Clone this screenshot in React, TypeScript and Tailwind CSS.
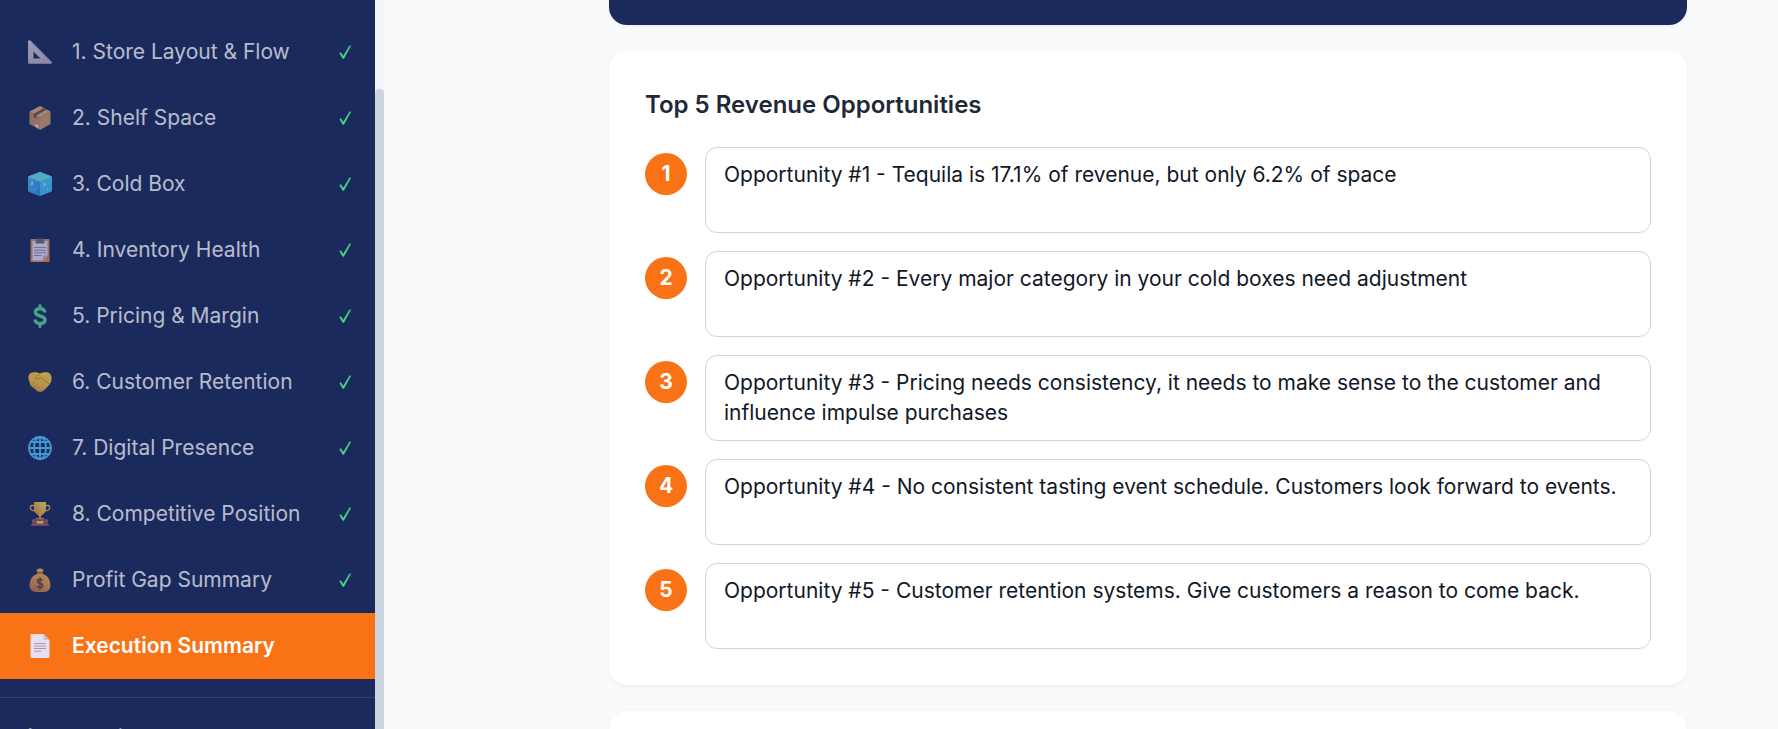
import type { ReactNode } from 'react';

interface NavItem {
  label: string;
  icon: ReactNode;
  done: boolean;
  active?: boolean;
}

function RulerIcon() {
  return (
    <svg viewBox="0 0 24 24" className="size-6">
      <defs>
        <linearGradient id="ruler" x1="0" y1="0" x2="0" y2="1">
          <stop offset="0" stopColor="#c8c2d6" />
          <stop offset="1" stopColor="#b4adbd" />
        </linearGradient>
      </defs>
      <path fillRule="evenodd" fill="url(#ruler)" d="M0 1.500Q0 .2 1.300 .2Q2 0 3 .9L23.500 21.800Q24.500 23.700 22.500 23.700H1.300Q0 23.700 0 22.400ZM5.500 11.500V18.500H12.500Z" />
      <path d="M4 2.800L23 21.800" fill="none" stroke="#8f6fe0" strokeWidth="1.300" strokeDasharray="1 1.700" />
    </svg>
  );
}

function BoxIcon() {
  return (
    <svg viewBox="0 0 24 24" className="size-6">
      <path d="M12 0L22.500 5.500L12 11.500L1.500 5.500Z" fill="#d0a680" />
      <path d="M1.500 5.500L12 11.500V24L1.500 18Z" fill="#bd886c" />
      <path d="M22.500 5.500L12 11.500V24L22.500 18Z" fill="#c8926b" />
      <path d="M15.800 2L5.500 8V11.500L8.200 12.800V9.400L18.600 3.500Z" fill="#7a4f46" />
      <path d="M7.500 18L10.500 19.500V22L7.500 20.500Z" fill="#efdff2" />
    </svg>
  );
}

function IceIcon() {
  return (
    <svg viewBox="0 0 24 24" className="size-6">
      <defs>
        <linearGradient id="iceLeft" x1="0" y1="0" x2="1" y2="1">
          <stop offset="0" stopColor="#50b3df" />
          <stop offset="1" stopColor="#367eee" />
        </linearGradient>
        <linearGradient id="iceRight" x1="0" y1="0" x2="0" y2="1">
          <stop offset="0" stopColor="#48c0ed" />
          <stop offset="1" stopColor="#40b4f5" />
        </linearGradient>
      </defs>
      <path d="M12 0L23.300 4.200Q24 4.600 24 5.300V18.200Q24 19.300 23 19.700L12 24L1 19.700Q0 19.300 0 18.200V5.300Q0 4.600 .7 4.200Z" fill="url(#iceRight)" />
      <path d="M0 5L12 9.500V24L1 19.700Q0 19.300 0 18.200Z" fill="url(#iceLeft)" />
      <path d="M12 0L24 4.600L12 9.500L0 4.600Z" fill="#66d6e8" />
      <path d="M4 9Q6 12.500 4 13.500Q2 13 4 9ZM16.500 10Q18.500 13.500 16.500 14.500Q14.500 13.500 16.500 10Z" fill="#a9e0fa" />
      <circle cx="6.500" cy="18" r=".8" fill="#8bd3fa" />
      <circle cx="19.500" cy="17" r=".7" fill="#9bdcfb" />
      <circle cx="9.500" cy="15" r=".6" fill="#8bd3fa" />
    </svg>
  );
}

function ClipboardIcon() {
  return (
    <svg viewBox="0 0 24 24" className="size-6">
      <rect x="2.500" y="1" width="19" height="23" rx="1" fill="#cb8762" />
      <path d="M4.500 3H19.500V17.500L15 22.500H4.500Z" fill="#dcd3ec" />
      <path d="M15 22.500V18.500Q15 17.500 16 17.500H19.500Z" fill="#b6a6cc" />
      <path d="M7.500 1.500H10Q10.500 0 12 0Q13.500 0 14 1.500H16.500V5.500H7.500Z" fill="#6b6677" />
      <path d="M6 9.500H18M6 12.200H18M6 14.800H18M6 17.500H13.500" stroke="#9088a6" strokeWidth="1" />
    </svg>
  );
}

function DollarIcon() {
  return (
    <svg viewBox="0 0 24 24" className="size-6">
      <path d="M16.900 8.500Q16.200 4.700 12 4.700Q7.400 4.700 7.400 8.100Q7.400 10.800 12 12Q17 13.200 17 16Q17 19.500 12 19.500Q7.600 19.500 7 15.500" fill="none" stroke="#55c997" strokeWidth="3.400" />
      <path d="M12 1.500V4.500M12 20V22.500" stroke="#55c997" strokeWidth="3" strokeLinecap="round" />
    </svg>
  );
}

function HandshakeIcon() {
  return (
    <svg viewBox="0 0 24 24" className="size-6">
      <defs>
        <linearGradient id="hands" x1=".6" y1="0" x2=".3" y2="1">
          <stop offset="0" stopColor="#f3c945" />
          <stop offset=".6" stopColor="#f0b645" />
          <stop offset="1" stopColor="#e39147" />
        </linearGradient>
      </defs>
      <path d="M6 2.300Q9 1.800 12 3.500Q15 1.800 18.500 2.300Q22 2.500 23.300 6Q24.500 10.500 21.500 14.500L17 19.500Q14 22.500 11.500 21.800Q9 21.800 7.500 19.500L3 16Q1.200 14 1.800 12Q-.2 9 .7 5.500Q2 2.300 6 2.300Z" fill="url(#hands)" />
      <path d="M12 3.500Q8 6 7.300 8.500Q9.500 10 13 7.500L21 14M3.500 15.500L6 12.500M5.800 18L8.500 14.500M8.500 20L11 17" fill="none" stroke="#bf7a35" strokeWidth=".8" strokeLinecap="round" />
    </svg>
  );
}

function GlobeIcon() {
  return (
    <svg viewBox="0 0 24 24" className="size-6" fill="none" stroke="#4fbdf8" strokeWidth="1.800">
      <circle cx="12" cy="12" r="11" />
      <ellipse cx="12" cy="12" rx="6" ry="11" />
      <path d="M12 1V23M1 12H23M3 6H21M3 18H21" />
    </svg>
  );
}

function TrophyIcon() {
  return (
    <svg viewBox="0 0 24 24" className="size-6">
      <defs>
        <linearGradient id="cup" x1="0" y1="1" x2="1" y2="0">
          <stop offset="0" stopColor="#dc7c42" />
          <stop offset="1" stopColor="#ecd562" />
        </linearGradient>
      </defs>
      <path d="M6.500 3.500H3.800Q1.700 3.800 2.700 6.700Q3.700 9 7 8.600M17.500 3.500H20.200Q22.300 3.800 21.300 6.700Q20.300 9 17 8.600" fill="none" stroke="#dea050" strokeWidth="1.500" />
      <path d="M6 0H18V6Q18 11 14 13L13 14.500V17.500H11V14.500L10 13Q6 11 6 6Z" fill="url(#cup)" />
      <path d="M8 16H16V17.500H8Z" fill="#d58b40" />
      <path d="M5.500 17H18.500Q20 17 20 18.500V22Q21 22 21 24H3Q3 22 4 22V18.500Q4 17 5.500 17Z" fill="#8d566d" />
      <rect x="8.800" y="19" width="6.400" height="2.600" fill="#edc65f" />
    </svg>
  );
}

function MoneyBagIcon() {
  return (
    <svg viewBox="0 0 24 24" className="size-6">
      <defs>
        <linearGradient id="bag" x1=".7" y1="0" x2=".3" y2="1">
          <stop offset="0" stopColor="#eab452" />
          <stop offset=".6" stopColor="#d69350" />
          <stop offset="1" stopColor="#b3704c" />
        </linearGradient>
      </defs>
      <path d="M8.500 1.300Q10.500 1.500 12 0Q13.500 1.500 15.500 1.300L14.300 5.500Q22.500 9 22.500 17Q22.500 24 16 24H8Q1.500 24 1.500 17Q1.500 9 9.700 5.500Z" fill="url(#bag)" />
      <path d="M9.500 4.800H14.500" stroke="#7d4b3e" strokeWidth="1.200" />
      <path d="M14.600 12.800Q14 11.300 12 11.300Q9.500 11.300 9.500 13.200Q9.500 14.700 12 15.200Q14.600 15.700 14.600 17.600Q14.600 19.600 12 19.600Q9.700 19.600 9.200 17.700M12 9.500V21.500" fill="none" stroke="#654340" strokeWidth="1.600" />
    </svg>
  );
}

function PageIcon() {
  return (
    <svg viewBox="0 0 24 24" className="size-6">
      <path d="M3.500 0H15.500L21.500 6V23Q21.500 24 20.500 24H3.500Q2.500 24 2.500 23V1Q2.500 0 3.500 0Z" fill="#e9dff0" />
      <path d="M15.500 0L21.500 6H16.500Q15.500 6 15.500 5Z" fill="#cbbdd6" />
      <path d="M6 9.500H18M6 12H18M6 14.500H18M6 17.200H13.500" stroke="#a69bae" strokeWidth="1" />
    </svg>
  );
}

function CheckIcon() {
  return (
    <svg viewBox="0 0 12 14" className="h-[14px] w-3" role="img" aria-label="Complete">
      <path d="M.7 8.300L1.900 7.500L4.200 11.300L10.800 .5L11.700 .9L4.800 13.500H3.800Z" fill="#4ade80" stroke="#4ade80" strokeWidth=".4" />
    </svg>
  );
}

const navItems: NavItem[] = [
  { label: '1. Store Layout & Flow', icon: <RulerIcon />, done: true },
  { label: '2. Shelf Space', icon: <BoxIcon />, done: true },
  { label: '3. Cold Box', icon: <IceIcon />, done: true },
  { label: '4. Inventory Health', icon: <ClipboardIcon />, done: true },
  { label: '5. Pricing & Margin', icon: <DollarIcon />, done: true },
  { label: '6. Customer Retention', icon: <HandshakeIcon />, done: true },
  { label: '7. Digital Presence', icon: <GlobeIcon />, done: true },
  { label: '8. Competitive Position', icon: <TrophyIcon />, done: true },
  { label: 'Profit Gap Summary', icon: <MoneyBagIcon />, done: true },
  { label: 'Execution Summary', icon: <PageIcon />, done: false, active: true },
];

const opportunities = [
  'Opportunity #1 - Tequila is 17.1% of revenue, but only 6.2% of space',
  'Opportunity #2 - Every major category in your cold boxes need adjustment',
  'Opportunity #3 - Pricing needs consistency, it needs to make sense to the customer and influence impulse purchases',
  'Opportunity #4 - No consistent tasting event schedule. Customers look forward to events.',
  'Opportunity #5 - Customer retention systems. Give customers a reason to come back.',
];

function Sidebar() {
  return (
    <aside className="flex shrink-0">
      <div className="w-[375px] bg-[#1b2a5c] pt-[19px] text-white">
        <nav>
          {navItems.map((item) => (
            <button
              key={item.label}
              className={`flex h-[66px] w-full items-center gap-5 pl-7 pr-6 text-left text-[21px] leading-[30px] ${
                item.active ? 'bg-[#f97316] font-semibold text-white' : 'text-white/70'
              }`}
            >
              <span className={item.active ? '' : 'opacity-75'}>{item.icon}</span>
              <span className="flex-1 whitespace-nowrap">{item.label}</span>
              {item.done && <CheckIcon />}
            </button>
          ))}
        </nav>
        <div className="mt-[18px] border-t border-white/10 px-6 py-6 text-lg text-white/50">
          Auto-saved
        </div>
      </div>
      {/* Scrollbar */}
      <div className="w-[9px] bg-[#f1f5f9] pt-[89px]">
        <div className="h-full rounded-t-full bg-[#cbd5e1]" />
      </div>
    </aside>
  );
}

export default function App() {
  return (
    <div className="flex h-screen overflow-hidden bg-[#f9fafc] font-['Inter',sans-serif]">
      <Sidebar />
      <main className="flex min-w-0 flex-1 flex-col gap-[26px] pl-[225px] pr-[91px]">
        <div className="h-[25px] shrink-0 rounded-b-[18px] bg-[#1b2a5c] shadow-[0_1px_4px_rgba(0,0,0,0.06)]" />

        <section className="shrink-0 rounded-[18px] bg-white p-9 shadow-[0_1px_4px_rgba(0,0,0,0.06)]">
          <h2 className="mb-6 text-2xl leading-9 font-semibold text-[#1f2937]">
            Top 5 Revenue Opportunities
          </h2>
          <div className="flex flex-col gap-[18px]">
            {opportunities.map((text, i) => (
              <div key={i} className="flex items-start gap-[18px]">
                <label
                  htmlFor={`opportunity-${i + 1}`}
                  className="mt-[6px] flex size-[42px] shrink-0 items-center justify-center rounded-full bg-[#f97316] text-[21px] font-bold text-white"
                >
                  {i + 1}
                </label>
                <textarea
                  id={`opportunity-${i + 1}`}
                  rows={2}
                  defaultValue={text}
                  className="block min-w-0 flex-1 resize-none overflow-hidden rounded-xl border border-[#d1d5db] bg-white px-[18px] py-3 text-[21px] leading-[30px] text-[#111827]"
                />
              </div>
            ))}
          </div>
        </section>

        <section className="h-36 shrink-0 rounded-[18px] bg-white shadow-[0_1px_4px_rgba(0,0,0,0.06)]" />
      </main>
    </div>
  );
}
